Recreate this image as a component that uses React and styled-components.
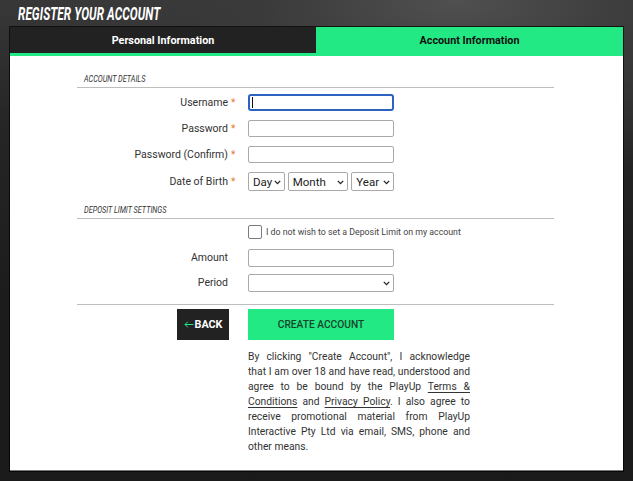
import React from "react";
import styled, { createGlobalStyle } from "styled-components";

const GREEN = "#22e984";

const Global = createGlobalStyle`
  html, body { margin: 0; padding: 0; }
  body {
    font-family: Roboto, "Liberation Sans", sans-serif;
    background: #1b1b1b;
  }
`;

const Page = styled.div`
  min-height: 481px;
  box-sizing: border-box;
  padding: 0 10px 11px;
  background:
    radial-gradient(ellipse 70% 38% at 72% 0%, #505050 0%, #3a3a3a 45%, rgba(40,40,40,0) 100%),
    linear-gradient(to bottom, #383838 0px, #262626 120px, #1c1c1c 300px, #1a1a1a 100%);
`;

const TitleBar = styled.div`
  height: 27px;
  display: flex;
  align-items: center;
  padding-left: 8px;
`;

const Condensed = styled.span`
  display: inline-block;
  transform: scaleX(${(p) => p.$scale});
  transform-origin: left center;
  white-space: nowrap;
`;

const Title = styled.h1`
  margin: 0;
  font-size: 19px;
  line-height: 20px;
  font-weight: 700;
  font-style: italic;
  color: #fff;
  letter-spacing: 0.1px;
`;

const Panel = styled.div`
  background: #fff;
  box-shadow: 0 0 0 1px rgba(0, 0, 0, 0.7);
  border-bottom: 1px solid #7a7a7a;
`;

const Tabs = styled.div`
  display: grid;
  grid-template-columns: 306px 1fr;
  border-bottom: 3px solid ${GREEN};
`;

const Tab = styled.div`
  height: 26px;
  display: flex;
  align-items: center;
  justify-content: center;
  font-size: 10.8px;
  font-weight: 700;
  background: ${(p) => (p.$active ? GREEN : "#222")};
  color: ${(p) => (p.$active ? "#111" : "#fff")};
`;

const Body = styled.div`
  padding: 0 69px 16px 67px;
  font-size: 10.5px;
  line-height: 12px;
`;

const SectionHeader = styled.div`
  margin-top: ${(p) => p.$top}px;
  padding: 0 0 2px 7px;
  height: 11px;
  font-size: 8.6px;
  line-height: 11px;
  font-style: italic;
  color: #333;
  border-bottom: 1px solid #bdbdbd;
`;

const Fields = styled.div`
  display: flex;
  flex-direction: column;
  gap: ${(p) => p.$gap}px;
  padding-top: ${(p) => p.$top}px;
`;

const Row = styled.div`
  display: grid;
  grid-template-columns: 151px 20px 146px 1fr;
  align-items: center;
  font-size: 10.5px;
  line-height: 12px;
`;

const Label = styled.label`
  text-align: right;
  color: #333;
  white-space: nowrap;
`;

const Star = styled.span`
  color: #e8782f;
  font-size: 10px;
  padding-left: 3px;
`;

const InputWrap = styled.div`
  position: relative;
  display: flex;
`;

const TextInput = styled.input`
  box-sizing: border-box;
  width: 146px;
  height: ${(p) => p.$h || 17}px;
  margin: 0;
  padding: 0 4px;
  font: inherit;
  background: #fff;
  border: ${(p) => (p.$focused ? "2px solid #2d62c2" : "1px solid #a9a9a9")};
  border-radius: ${(p) => (p.$focused ? 3 : 2)}px;
  outline: none;
`;

const Caret = styled.span`
  position: absolute;
  left: 4px;
  top: 3px;
  width: 1px;
  height: 11px;
  background: #111;
`;

const SelectGroup = styled.div`
  display: flex;
  gap: 3px;
`;

const SelectWrap = styled.div`
  position: relative;
  width: ${(p) => p.$w}px;
  height: ${(p) => p.$h || 19}px;
`;

const Select = styled.select`
  appearance: none;
  box-sizing: border-box;
  width: 100%;
  height: 100%;
  margin: 0;
  padding: 0 0 0 4px;
  font-family: Roboto, "Liberation Sans", sans-serif;
  font-size: 11.5px;
  color: #222;
  background: #fff;
  border: 1px solid #a9a9a9;
  border-radius: 2px;
  outline: none;
`;

const Chevron = styled.svg`
  position: absolute;
  right: 4px;
  top: 50%;
  width: 7px;
  height: 5px;
  margin-top: -2px;
  pointer-events: none;
`;

function SelectBox({ w, h, value }) {
  return (
    <SelectWrap $w={w} $h={h}>
      <Select defaultValue={value}>
        <option>{value}</option>
      </Select>
      <Chevron viewBox="0 0 7 5">
        <path d="M0.8 0.9 L3.5 3.6 L6.2 0.9" fill="none" stroke="#222" strokeWidth="1.3" />
      </Chevron>
    </SelectWrap>
  );
}

const CheckLine = styled.label`
  grid-column: 3 / 5;
  display: flex;
  align-items: center;
  gap: 4px;
  font-size: 8.8px;
  color: #444;
  white-space: nowrap;
`;

const Checkbox = styled.input`
  appearance: none;
  box-sizing: border-box;
  width: 14px;
  height: 14px;
  margin: 0;
  border: 1px solid #7b7b7b;
  border-radius: 2px;
  background: #fff;
`;

const Divider = styled.hr`
  margin: 12px 0 0;
  border: 0;
  border-top: 1px solid #bdbdbd;
  height: 0;
`;

const Actions = styled.div`
  display: grid;
  grid-template-columns: 152px 19px 222px;
  margin-top: 4px;
`;

const BackButton = styled.button`
  justify-self: end;
  width: 52px;
  height: 31px;
  display: flex;
  align-items: center;
  justify-content: center;
  gap: 1px;
  padding: 0;
  border: 0;
  background: #222;
  color: #fff;
  font-family: Roboto, "Liberation Sans", sans-serif;
  font-size: 10.8px;
  font-weight: 700;
`;

const Arrow = styled.svg`
  width: 10px;
  height: 7px;
`;

const CreateButton = styled.button`
  grid-column: 3;
  width: 146px;
  height: 31px;
  padding: 0;
  border: 0;
  background: ${GREEN};
  color: #17452b;
  font-family: Roboto, "Liberation Sans", sans-serif;
  font-size: 10.2px;
  font-weight: 500;
`;

const Terms = styled.div`
  grid-column: 3;
  margin-top: 9px;
  font-size: 10.3px;
  line-height: 15px;
  color: #333;
`;

const Line = styled.span`
  display: block;
  white-space: nowrap;
  text-align: ${(p) => (p.$last ? "left" : "justify")};
  text-align-last: ${(p) => (p.$last ? "left" : "justify")};
`;

const Link = styled.a`
  color: #333;
  text-decoration: underline;
  text-underline-offset: 2px;
  text-decoration-thickness: 1px;
`;

function Field({ label, required, children }) {
  return (
    <Row>
      <Label>{label}</Label>
      <span>{required && <Star>*</Star>}</span>
      {children}
    </Row>
  );
}

export default function App() {
  return (
    <>
      <Global />
      <Page>
        <TitleBar>
          <Title>
            <Condensed $scale={0.62}>REGISTER YOUR ACCOUNT</Condensed>
          </Title>
        </TitleBar>
        <Panel>
          <Tabs>
            <Tab>Personal Information</Tab>
            <Tab $active>Account Information</Tab>
          </Tabs>
          <Body>
            <SectionHeader $top={18}>
              <Condensed $scale={0.85}>ACCOUNT DETAILS</Condensed>
            </SectionHeader>
            <Fields $gap={9} $top={6}>
              <Field label="Username" required>
                <InputWrap>
                  <TextInput $focused type="text" />
                  <Caret />
                </InputWrap>
              </Field>
              <Field label="Password" required>
                <TextInput type="password" />
              </Field>
              <Field label="Password (Confirm)" required>
                <TextInput type="password" />
              </Field>
              <Field label="Date of Birth" required>
                <SelectGroup>
                  <SelectBox w={37} value="Day" />
                  <SelectBox w={61} value="Month" />
                  <SelectBox w={43} value="Year" />
                </SelectGroup>
              </Field>
            </Fields>

            <SectionHeader $top={14}>
              <Condensed $scale={0.85}>DEPOSIT LIMIT SETTINGS</Condensed>
            </SectionHeader>
            <Fields $gap={10} $top={6}>
              <Row>
                <span />
                <span />
                <CheckLine>
                  <Checkbox type="checkbox" />
                  I do not wish to set a Deposit Limit on my account
                </CheckLine>
              </Row>
              <Fields $gap={7} $top={0}>
                <Field label="Amount">
                  <TextInput $h={18} type="text" />
                </Field>
                <Field label="Period">
                  <SelectBox w={146} h={18} value="" />
                </Field>
              </Fields>
            </Fields>

            <Divider />

            <Actions>
              <BackButton>
                <Arrow viewBox="0 0 10 7">
                  <path d="M9.5 3.5 H1 M3.8 0.7 L1 3.5 L3.8 6.3" fill="none" stroke={GREEN} strokeWidth="1" />
                </Arrow>
                BACK
              </BackButton>
              <CreateButton>CREATE ACCOUNT</CreateButton>
              <Terms>
                <Line>By clicking "Create Account", I acknowledge</Line>
                <Line>that I am over 18 and have read, understood and</Line>
                <Line>
                  agree to be bound by the PlayUp <Link>Terms &amp;</Link>
                </Line>
                <Line>
                  <Link>Conditions</Link> and <Link>Privacy Policy</Link>. I also agree to
                </Line>
                <Line>receive promotional material from PlayUp</Line>
                <Line>Interactive Pty Ltd via email, SMS, phone and</Line>
                <Line $last>other means.</Line>
              </Terms>
            </Actions>
          </Body>
        </Panel>
      </Page>
    </>
  );
}
